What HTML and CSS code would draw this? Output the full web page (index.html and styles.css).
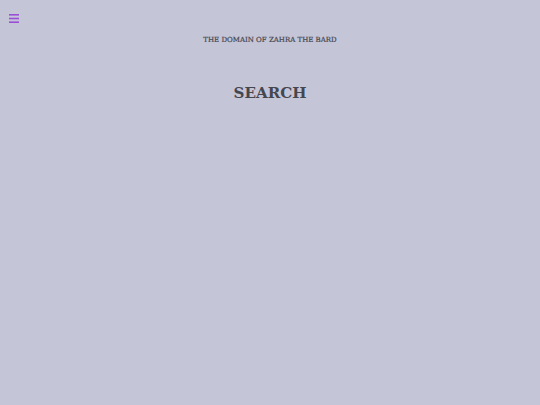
FILE: index.html
```html
<!DOCTYPE html>
<html>
<head>
<meta charset="utf-8">
<link rel="stylesheet" href="styles.css">
</head>
<body>
<header class="top">
  <button class="menu" aria-label="Menu">
    <svg width="10" height="9" viewBox="0 0 10 9"><rect x="0" y="0" width="10" height="1.6" fill="#9b4fd6"/><rect x="0" y="3.7" width="10" height="1.6" fill="#9b4fd6"/><rect x="0" y="7.4" width="10" height="1.6" fill="#9b4fd6"/></svg>
  </button>
  <div class="site-title">THE DOMAIN OF ZAHRA THE BARD</div>
</header>
<main class="content">
  <h1 class="page-title">SEARCH</h1>
</main>
</body>
</html>
```
FILE: styles.css
```css
html, body {
  margin: 0;
  padding: 0;
  background: #c5c5d8;
  height: 100%;
}
body {
  font-family: "DejaVu Serif", "Liberation Serif", serif;
  color: #45474f;
}
.top {
  position: relative;
  padding-top: 35px;
  text-align: center;
}
.menu {
  position: absolute;
  left: 9px;
  top: 14px;
  border: 0;
  padding: 0;
  background: none;
  width: 10px;
  height: 9px;
  display: block;
}
.menu svg { display: block; }
.site-title {
  font-size: 7px;
  font-weight: normal;
  line-height: 10px;
  -webkit-text-stroke: 0.2px #45474f;
}
.content {
  text-align: center;
  padding-top: 37px;
}
.page-title {
  margin: 0;
  font-size: 15.1px;
  line-height: 22px;
  font-weight: bold;
}
```
